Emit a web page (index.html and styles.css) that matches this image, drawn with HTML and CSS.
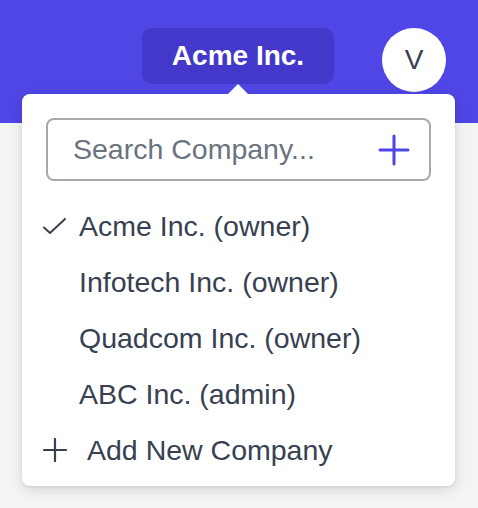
FILE: index.html
```html
<!DOCTYPE html>
<html lang="en">
<head>
  <meta charset="UTF-8">
  <title>Company Switcher</title>
  <link rel="stylesheet" href="styles.css">
</head>
<body>

  <div class="page">
    <header class="topbar">
      <button class="company-btn">Acme Inc.</button>
      <div class="avatar">V</div>
    </header>

    <div class="dropdown">
      <div class="search">
        <input type="text" placeholder="Search Company...">
        <svg class="search-add" width="32" height="32" viewBox="0 0 32 32">
          <path d="M16 2v28M2 16h28" stroke="#4f46e5" stroke-width="3" stroke-linecap="round" fill="none"/>
        </svg>
      </div>

      <ul class="companies">
        <li class="active">
          <svg class="icon" width="24" height="24" viewBox="0 0 24 24">
            <path d="M1 13.5l6 5.5L22 5" stroke="#374151" stroke-width="2" stroke-linecap="round" stroke-linejoin="round" fill="none"/>
          </svg>
          <span>Acme Inc. (owner)</span>
        </li>
        <li><span>Infotech Inc. (owner)</span></li>
        <li><span>Quadcom Inc. (owner)</span></li>
        <li><span>ABC Inc. (admin)</span></li>
        <li class="add">
          <svg class="icon" width="24" height="24" viewBox="0 0 24 24">
            <path d="M12 1v22M1 12h22" stroke="#374151" stroke-width="2.2" stroke-linecap="round" fill="none"/>
          </svg>
          <span>Add New Company</span>
        </li>
      </ul>
    </div>
  </div>

</body>
</html>
```

FILE: styles.css
```css
body {
  margin: 0;
  background: #f3f4f6;
  font-family: 'Liberation Sans', Arial, sans-serif;
  color: #374151;
}
.page {
  position: relative;
  min-height: 508px;
}
.topbar {
  height: 123px;
  background: #4f46e5;
  display: flex;
  justify-content: flex-end;
  align-items: flex-start;
  gap: 48px;
  padding: 28px 32px 0 0;
  box-sizing: border-box;
}
.company-btn {
  width: 192px;
  height: 56px;
  border: none;
  border-radius: 10px;
  background: #4338ca;
  color: #fff;
  font-family: inherit;
  font-size: 28px;
  font-weight: bold;
  padding: 0;
}
.avatar {
  width: 64px;
  height: 64px;
  border-radius: 50%;
  background: #fff;
  display: flex;
  align-items: center;
  justify-content: center;
  font-size: 28px;
  color: #374151;
}
.dropdown {
  position: absolute;
  z-index: 10;
  top: 94px;
  left: 22px;
  width: 433px;
  background: #fff;
  border-radius: 8px;
  box-shadow: 0 4px 14px rgba(0,0,0,0.12), 0 1px 3px rgba(0,0,0,0.08);
  padding: 24px 24px 8px;
  box-sizing: border-box;
}
.dropdown::before {
  content: "";
  position: absolute;
  top: -10px;
  left: 206px;
  border-left: 10px solid transparent;
  border-right: 10px solid transparent;
  border-bottom: 10px solid #fff;
}
.search {
  height: 63px;
  border: 2px solid #a5a9b0;
  border-radius: 8px;
  display: flex;
  align-items: center;
  padding: 0 19px 0 25px;
  box-sizing: border-box;
}
.search input {
  flex: 1;
  min-width: 0;
  border: none;
  outline: none;
  font-family: inherit;
  font-size: 28.5px;
  color: #374151;
  padding: 0;
  background: transparent;
}
.search input::placeholder {
  color: #6b7280;
}
.companies {
  list-style: none;
  margin: 17px 0 0 -3px;
  padding: 0;
}
.companies li {
  height: 56px;
  display: flex;
  align-items: center;
  font-size: 28.5px;
  padding-left: 36px;
}
.companies li.active,
.companies li.add {
  padding-left: 0;
}
.companies .icon {
  flex: none;
  width: 24px;
  height: 24px;
  margin-right: 12px;
}
.companies li.add .icon {
  margin-right: 20px;
}
```
